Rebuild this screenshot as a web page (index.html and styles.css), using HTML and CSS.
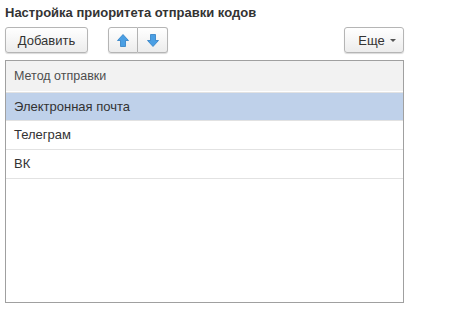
FILE: index.html
```html
<!DOCTYPE html>
<html lang="ru">
<head>
  <meta charset="UTF-8">
  <title>Настройка приоритета отправки кодов</title>
  <link rel="stylesheet" href="styles.css">
</head>
<body>
  <div class="form">
    <h1 class="title">Настройка приоритета отправки кодов</h1>

    <div class="toolbar">
      <button type="button" class="btn btn-add">Добавить</button>
      <div class="btn-group">
        <button type="button" class="btn btn-icon" title="Вверх">
          <svg width="12" height="13" viewBox="0 0 12 13">
            <path d="M6 0.5 L11.5 6.5 L8.5 6.5 L8.5 12.5 L3.5 12.5 L3.5 6.5 L0.5 6.5 Z" fill="#4a9fe4" stroke="#2f7fc4" stroke-width="0.8" stroke-linejoin="round"/>
          </svg>
        </button>
        <button type="button" class="btn btn-icon" title="Вниз">
          <svg width="12" height="13" viewBox="0 0 12 13">
            <path d="M6 12.5 L11.5 6.5 L8.5 6.5 L8.5 0.5 L3.5 0.5 L3.5 6.5 L0.5 6.5 Z" fill="#4a9fe4" stroke="#2f7fc4" stroke-width="0.8" stroke-linejoin="round"/>
          </svg>
        </button>
      </div>
      <button type="button" class="btn btn-more">Еще <span class="caret"></span></button>
    </div>

    <div class="grid">
      <div class="grid-head">Метод отправки</div>
      <div class="grid-row selected">Электронная почта</div>
      <div class="grid-row">Телеграм</div>
      <div class="grid-row">ВК</div>
    </div>
  </div>
</body>
</html>
```

FILE: styles.css
```css
body {
  margin: 0;
  font-family: Arial, "Liberation Sans", sans-serif;
  font-size: 13px;
  color: #333333;
  background-color: #ffffff;
}

.form {
  width: 399px;
  padding: 5px 0 0 5px;
}

.title {
  margin: 0;
  font-size: 13px;
  font-weight: bold;
  line-height: 16px;
  color: #333333;
}

.toolbar {
  display: flex;
  align-items: center;
  margin-top: 6px;
  height: 26px;
}

.btn {
  height: 26px;
  box-sizing: border-box;
  font-family: inherit;
  font-size: 13px;
  color: #333333;
  background: linear-gradient(#ffffff, #ececec);
  border: 1px solid #b5b5b5;
  border-radius: 3px;
  box-shadow: 0 1px 1px rgba(0, 0, 0, 0.15);
  padding: 0 10px;
  cursor: pointer;
}

.btn-add {
  width: 83px;
}

.btn-group {
  display: flex;
  margin-left: 20px;
}

.btn-group .btn-icon {
  width: 30px;
  padding: 0;
  display: flex;
  align-items: center;
  justify-content: center;
  border-radius: 0;
}

.btn-group .btn-icon:first-child {
  border-radius: 3px 0 0 3px;
}

.btn-group .btn-icon:last-child {
  border-left: none;
  border-radius: 0 3px 3px 0;
}

.btn-more {
  margin-left: auto;
  width: 60px;
  padding: 0 0 0 6px;
  display: flex;
  align-items: center;
  justify-content: center;
  gap: 5px;
}

.caret {
  width: 0;
  height: 0;
  border-left: 3px solid transparent;
  border-right: 3px solid transparent;
  border-top: 3px solid #555555;
}

.grid {
  margin-top: 7px;
  height: 243px;
  box-sizing: border-box;
  border: 1px solid #a0a0a0;
}

.grid-head {
  height: 30px;
  line-height: 30px;
  padding-left: 8px;
  background-color: #f2f2f2;
  color: #4d4d4d;
  font-size: 12.5px;
  border-bottom: 1px solid #ffffff;
  box-shadow: 0 1px 0 #e2e2e2;
  margin-bottom: 1px;
}

.grid-row {
  height: 29px;
  line-height: 28px;
  box-sizing: border-box;
  padding-left: 8px;
  border-bottom: 1px solid #e2e2e2;
}

.grid-row.selected {
  background-color: #bfd1ea;
  height: 28px;
  line-height: 27px;
}
```
